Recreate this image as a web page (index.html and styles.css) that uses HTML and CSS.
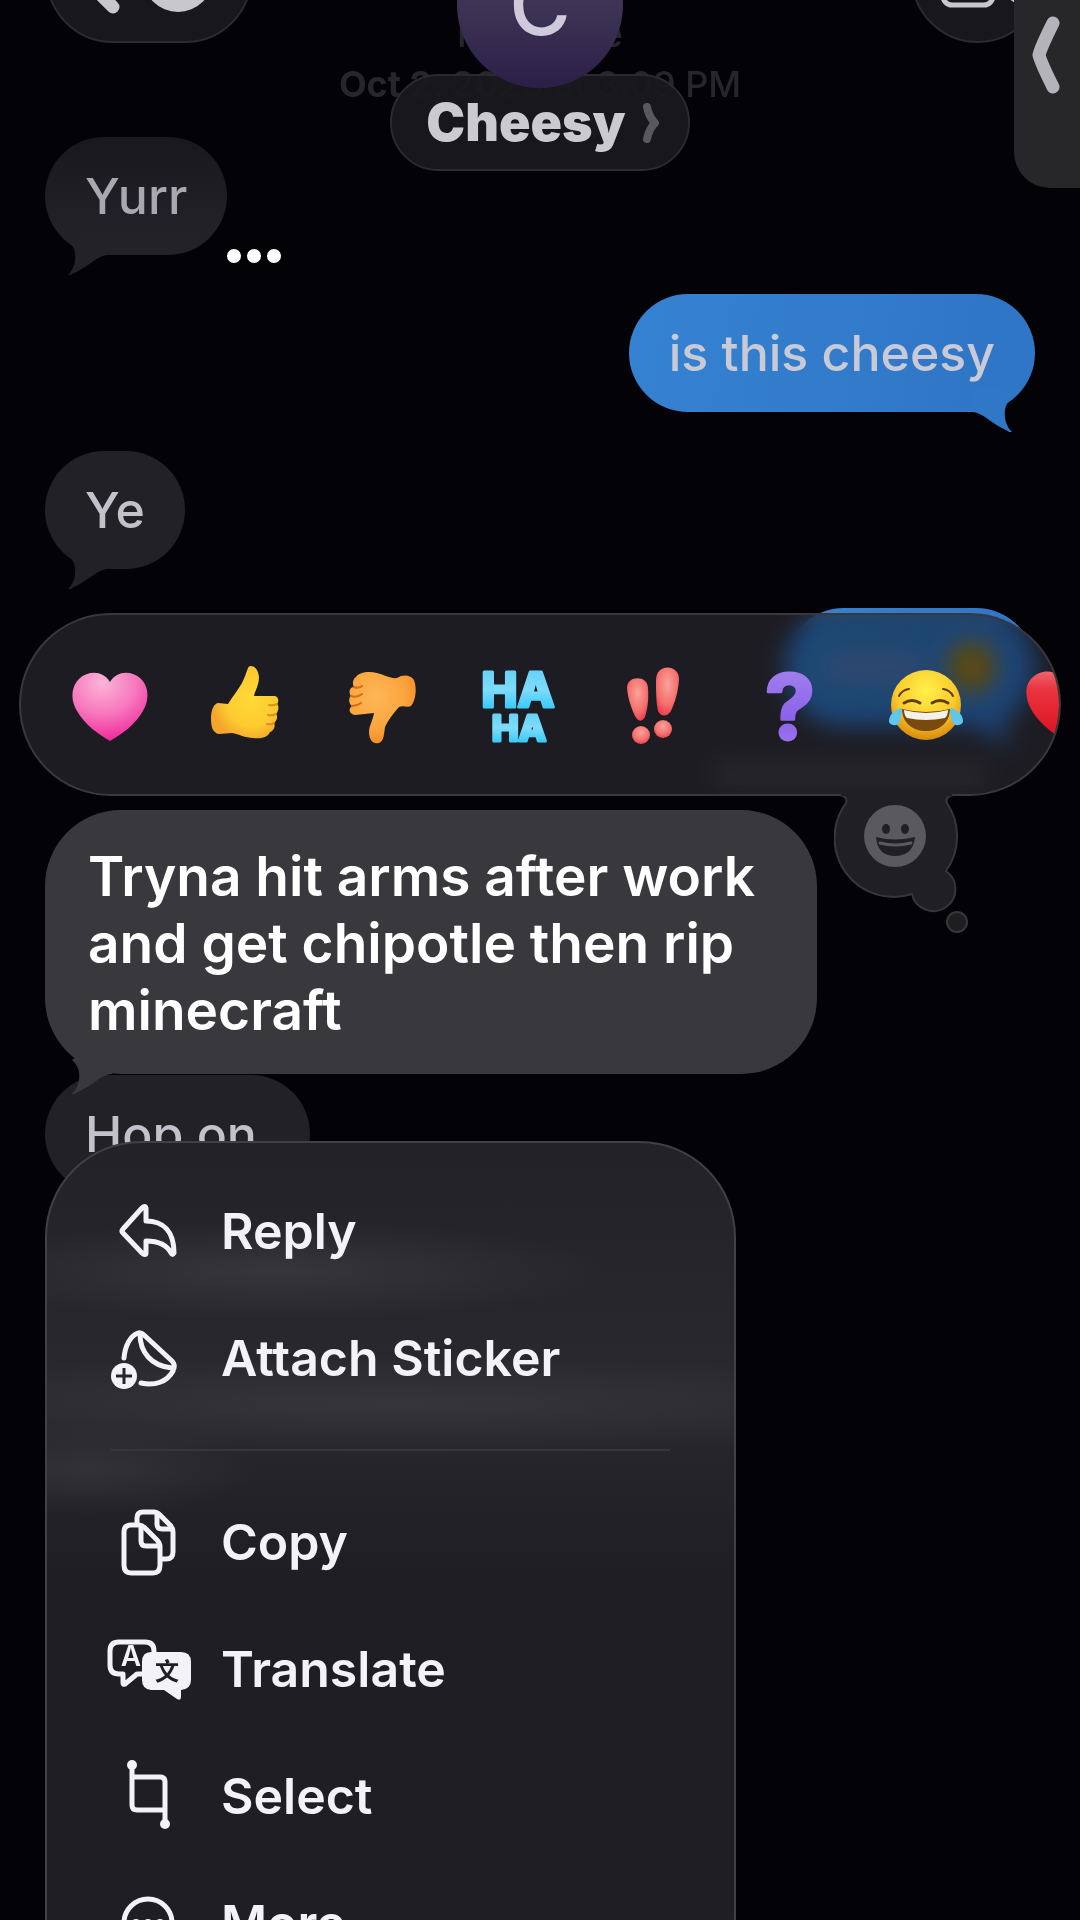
FILE: index.html
```html
<!DOCTYPE html>
<html lang="en">

<head>
    <meta charset="UTF-8">
    <meta name="viewport" content="width=device-width, initial-scale=1.0">
    <title>Cheesy</title>
    <link rel="stylesheet" href="styles.css">
</head>

<body>

    <main class="chat">
        <div class="stamp">
            <p>iMessage</p>
            <p><b>Oct 2, 2025</b> at 3:09 PM</p>
        </div>
        <p class="msg them first">Yurr</p>
        <p class="msg me">is this cheesy</p>
        <p class="msg them">Ye</p>
        <div class="msg me short"><span class="smudge"></span><span class="smudge face"></span></div>
        <div class="receipt"></div>
        <p class="msg them under">Hop on</p>
    </main>

    <header class="header">
        <button class="glass back" aria-label="Back">
            <svg width="206" height="133" viewBox="0 0 206 133">
                <path d="M67 35 L36 66 L67 97" class="line" stroke-width="13" />
                <circle cx="132" cy="67" r="35" fill="#c8c7cc" />
            </svg>
        </button>
        <div class="contact">
            <div class="avatar">C</div>
            <button class="glass name">Cheesy
                <svg width="18" height="40" viewBox="0 0 18 40">
                    <path d="M5 4 Q7 14 13 20 Q7 26 5 36" fill="none" stroke="#59595d" stroke-width="8" stroke-linecap="round" stroke-linejoin="round" />
                </svg>
            </button>
        </div>
        <button class="glass video" aria-label="Video call">
            <svg width="133" height="133" viewBox="0 0 133 133">
                <rect x="32" y="54" width="50" height="41" rx="9" class="line" stroke-width="5" />
                <path d="M90 68 L104 58 V90 L90 80 Z" class="line" stroke-width="5" />
            </svg>
        </button>
    </header>

    <button class="side-tab" aria-label="Open panel">
        <svg width="28" height="78" viewBox="0 0 28 78">
            <path d="M21 7 Q9 31 7 39 Q9 47 21 71" fill="none" stroke="#b4b3ba" stroke-width="13" stroke-linecap="round" stroke-linejoin="round" />
        </svg>
    </button>

    <button class="dots" aria-label="More options"><i></i><i></i><i></i></button>

    <section class="overlay">
        <div class="reactions-wrap">
            <div class="reactions">
                <button aria-label="Love">
                    <svg viewBox="0 0 80 80">
                        <defs>
                            <radialGradient id="pink" cx=".4" cy=".15" r=".9">
                                <stop offset="0" stop-color="#fbb4d8" />
                                <stop offset=".5" stop-color="#f778bd" />
                                <stop offset="1" stop-color="#f0209a" />
                            </radialGradient>
                        </defs>
                        <path fill="url(#pink)" d="M40 17 C33 5 18 6 10 13 C0 22 1 36 7 46 C15 60 28 69 40 76 C52 69 65 60 73 46 C79 36 80 22 70 13 C62 6 47 5 40 17Z" />
                    </svg>
                </button>
                <button aria-label="Like">
                    <svg viewBox="0 0 80 80">
                        <defs>
                            <radialGradient id="yellow" cx=".6" cy=".45" r=".6">
                                <stop offset="0" stop-color="#ffda36" />
                                <stop offset=".65" stop-color="#fdca30" />
                                <stop offset="1" stop-color="#f3a52c" />
                            </radialGradient>
                        </defs>
                        <g transform="translate(5 0)">
                            <path fill="url(#yellow)" d="M37 3 C38 -1 47 0 48 12 C48 20 44 26 43 31 L63 31 C68 31 68 37 66 39 C68 41 68 46 65 49 C67 51 66 56 63 58 C65 62 62 66 59 67 C57 73 48 74 42 73 C34 73 28 69 21 68 L8 69 C2 68 0 62 0 54 C0 44 3 39 7 38 L17 39 C22 31 27 25 31 18 C34 12 35 8 37 3Z" />
                            <path d="M66 39 Q62 41 58 40 M65 49 Q61 51 57 50 M63 58 Q60 60 56 59" fill="none" stroke="#dd8f1c" stroke-width="2" stroke-linecap="round" />
                        </g>
                    </svg>
                </button>
                <button aria-label="Dislike">
                    <svg viewBox="0 0 80 80">
                        <defs>
                            <radialGradient id="orange" cx=".4" cy=".35" r=".7">
                                <stop offset="0" stop-color="#fdb757" />
                                <stop offset=".6" stop-color="#fba63f" />
                                <stop offset="1" stop-color="#f58a25" />
                            </radialGradient>
                        </defs>
                        <g transform="translate(7 7)">
                            <path fill="url(#orange)" d="M7 5 C10 0 20 -1 28 1 C36 3 42 7 48 6 C54 2 62 3 65 8 C68 16 67 28 62 34 C58 36 54 33 50 35 C44 42 39 48 36 55 C35 62 35 69 30 71 C23 73 20 66 20 60 C20 54 24 48 25 41 L6 43 C0 42 -1 37 3 34 C0 32 -1 26 2 24 C-1 20 1 15 5 15 C3 11 4 7 7 5Z" />
                            <path d="M5 15 Q9 17 13 14 M2 24 Q8 26 13 22 M3 34 Q8 34 12 31" fill="none" stroke="#d56b12" stroke-width="2" stroke-linecap="round" />
                        </g>
                    </svg>
                </button>
                <button aria-label="Laugh">
                    <svg viewBox="0 0 80 80">
                        <defs>
                            <linearGradient id="blue" x1="0" y1="0" x2="0" y2="1">
                                <stop offset="0" stop-color="#58cdf5" />
                                <stop offset=".5" stop-color="#7edcfb" />
                                <stop offset="1" stop-color="#12c0fb" />
                            </linearGradient>
                        </defs>
                        <text class="haha" x="40" y="42" font-size="48">HA</text>
                        <text class="haha" x="41" y="76" font-size="36">HA</text>
                    </svg>
                </button>
                <button aria-label="Emphasize">
                    <svg viewBox="0 0 80 80">
                        <defs>
                            <radialGradient id="coral" cx=".5" cy=".35" r=".65">
                                <stop offset="0" stop-color="#f9a39a" />
                                <stop offset=".65" stop-color="#f5716f" />
                                <stop offset="1" stop-color="#ee4250" />
                            </radialGradient>
                        </defs>
                        <g fill="url(#coral)">
                            <path d="M13 23 C13 10 34 10 34 23 C35 36 33 46 31 52 C28 57 24 57 21 51 C17 42 14 34 13 23Z" />
                            <path d="M42 15 C42 -2 66 -1 65 15 C64 27 61 37 57 46 C53 52 47 52 44 46 C42 37 42 27 42 15Z" />
                            <circle cx="27" cy="70" r="9" />
                            <circle cx="49" cy="64" r="9" />
                        </g>
                    </svg>
                </button>
                <button aria-label="Question">
                    <svg viewBox="0 0 80 80">
                        <defs>
                            <linearGradient id="violet" x1="0" y1="0" x2="0" y2="1">
                                <stop offset="0" stop-color="#a98af0" />
                                <stop offset=".6" stop-color="#8c62ea" />
                                <stop offset="1" stop-color="#a37df2" />
                            </linearGradient>
                        </defs>
                        <text class="question" x="40" y="74" font-size="90">?</text>
                    </svg>
                </button>
                <button aria-label="Tears of joy">
                    <svg viewBox="0 0 80 80">
                        <defs>
                            <radialGradient id="joy" cx=".5" cy=".3" r=".7">
                                <stop offset="0" stop-color="#fff04a" />
                                <stop offset=".6" stop-color="#fbcb2d" />
                                <stop offset="1" stop-color="#d98a0c" />
                            </radialGradient>
                        </defs>
                        <circle cx="40" cy="40" r="35" fill="url(#joy)" />
                        <path d="M13 31 Q16 25 23 24 M67 31 Q64 25 57 24" fill="none" stroke="#5e3d09" stroke-width="2" stroke-linecap="round" />
                        <path d="M18 38 Q26 33 34 38 M46 38 Q54 33 62 38" fill="none" stroke="#5e3d09" stroke-width="3" stroke-linecap="round" />
                        <path d="M16 44 Q40 50 64 44 C64 58 53 66 40 66 C27 66 16 58 16 44Z" fill="#7a4a0c" />
                        <path d="M18 45 Q40 51 62 45 Q62 50 59 53 Q40 57 21 53 Q18 50 18 45Z" fill="#f4f1ea" />
                        <path d="M16 43 C10 44 3 49 3 56 C3 61 13 62 14 56 C15 52 16 48 16 43Z" fill="#5fc6ee" />
                        <path d="M64 43 C70 44 77 49 77 56 C77 61 67 62 66 56 C65 52 64 48 64 43Z" fill="#5fc6ee" />
                    </svg>
                </button>
                <button aria-label="Red heart">
                    <svg viewBox="0 0 80 80">
                        <defs>
                            <linearGradient id="red" x1="0" y1="0" x2="0" y2="1">
                                <stop offset="0" stop-color="#f0656b" />
                                <stop offset=".25" stop-color="#ea3540" />
                                <stop offset="1" stop-color="#d9121f" />
                            </linearGradient>
                        </defs>
                        <path fill="url(#red)" d="M40 16 C35 4 20 4 11 12 C2 20 3 33 9 44 C16 57 28 66 40 74 C52 66 64 57 71 44 C77 33 78 20 69 12 C60 4 45 4 40 16Z" />
                    </svg>
                </button>
            </div>
            <button class="more-emoji" aria-label="More emoji">
                <svg width="140" height="146" viewBox="834 791 140 146">
                    <path d="M839 795 Q848 796 846 803 A59 59 0 0 0 912 894 A22 22 0 1 0 946 871 A60 60 0 0 0 947 803 Q945 796 954 795" fill="#202024" stroke="#37363b" stroke-width="2" />
                    <path d="M841 791 H952 V796 H841 Z" fill="#202024" />
                    <circle cx="957" cy="922" r="10" fill="#1e1e21" stroke="#37363b" stroke-width="2" />
                    <circle cx="895" cy="836" r="31" fill="#5a595d" />
                    <ellipse cx="886" cy="829" rx="4" ry="5" fill="#202024" />
                    <ellipse cx="905" cy="829" rx="4" ry="5" fill="#202024" />
                    <path d="M876 837 Q895 842 915 837 C914 850 906 856 895 856 C884 856 877 850 876 837Z" fill="#202024" />
                    <path d="M880 843 Q895 847 911 843" fill="none" stroke="#5a595d" stroke-width="3" stroke-linecap="round" />
                </svg>
            </button>
        </div>

        <p class="held">Tryna hit arms after work and get chipotle then rip minecraft</p>

        <nav class="menu">
            <button class="item">
                <svg viewBox="0 0 90 76">
                    <path class="stroke" d="M43 15 V28 C60 28 71 38 71 60 C70 62 69 62 68 60 C64 52 56 48 43 48 V60 C43 62 41 62 39 60 L20 40 Q18 38 20 36 L39 15 Q42 12 43 15Z" />
                </svg>
                Reply
            </button>
            <button class="item">
                <svg viewBox="0 0 90 76">
                    <path class="stroke" d="M21 38 C22 26 27 16 35 13 Q38 12 41 15 L69 41 Q73 45 70 51 C64 62 52 66 38 63" />
                    <path class="stroke" d="M37 14 C37 32 48 46 69 48" />
                    <circle cx="21" cy="56" r="13" fill="#f3f2f8" />
                    <path d="M21 48 V64 M13 56 H29" stroke="#26262a" stroke-width="3" />
                </svg>
                Attach Sticker
            </button>
            <hr>
            <button class="item">
                <svg viewBox="0 0 90 76">
                    <path class="stroke" d="M34 19 V14 Q34 8 40 8 H51 Q54 8 57 11 L67 21 Q70 24 70 28 V48 Q70 55 63 55 H59" />
                    <path class="stroke" d="M54 10 V20 Q54 25 59 25 H68" />
                    <path class="stroke" d="M28 21 H36 Q39 21 42 24 L54 36 Q57 39 57 43 V61 Q57 69 50 69 H28 Q21 69 21 61 V28 Q21 21 28 21Z" />
                    <path class="stroke" d="M38 23 V37 Q38 42 43 42 H56" />
                </svg>
                Copy
            </button>
            <button class="item">
                <svg viewBox="0 0 90 76">
                    <path class="stroke" d="M39 43 H34 L22 53 Q20 54 20 52 V43 H16 Q7 43 7 34 V20 Q7 11 16 11 H42 Q51 11 51 20 V22" />
                    <text x="28" y="35" font-size="28" font-weight="600" text-anchor="middle" fill="#f3f2f8">A</text>
                    <path d="M48 21 H78 Q88 21 88 31 V49 Q88 58 78 59 V66 Q78 70 74 68 L61 59 H48 Q39 58 39 49 V31 Q39 21 48 21Z" fill="#f3f2f8" />
                    <text class="cjk" x="64" y="49" font-size="24" font-weight="700" text-anchor="middle" fill="#202024">文</text>
                </svg>
                Translate
            </button>
            <button class="item">
                <svg viewBox="0 0 90 76">
                    <path class="stroke" d="M29 10 V47 Q29 52 34 52 H61 M29 19 H57 Q62 19 62 24 V65" />
                    <circle cx="29" cy="7" r="5" fill="#f3f2f8" />
                    <circle cx="62" cy="66" r="5" fill="#f3f2f8" />
                </svg>
                Select
            </button>
            <button class="item">
                <svg viewBox="0 0 90 76">
                    <circle class="stroke" cx="45" cy="38" r="24" />
                    <circle cx="33" cy="38" r="4" fill="#f3f2f8" />
                    <circle cx="45" cy="38" r="4" fill="#f3f2f8" />
                    <circle cx="57" cy="38" r="4" fill="#f3f2f8" />
                </svg>
                More...
            </button>
        </nav>
    </section>

</body>

</html>
```

FILE: styles.css
```css
* {
    margin: 0;
    padding: 0;
    box-sizing: border-box;
}

body {
    position: relative;
    min-height: 100vh;
    overflow: hidden;
    background-color: #020207;
    font-family: Inter, "Liberation Sans", sans-serif;
    font-weight: 500;
    color: #f3f2f8;
}

button {
    border: none;
    background: none;
    font: inherit;
    color: inherit;
    cursor: pointer;
}

svg {
    display: block;
    flex: none;
}

/* conversation behind the menu */
.chat {
    display: flex;
    flex-direction: column;
    gap: 39px;
    padding: 9px 45px;
}

.stamp {
    text-align: center;
    font-size: 36px;
    line-height: 50px;
    color: #26262b;
}

.stamp b {
    font-weight: 700;
}

.msg {
    position: relative;
    align-self: flex-start;
    height: 118px;
    padding: 0 40px;
    border-radius: 59px;
    font-size: 50px;
    line-height: 119px;
    background-color: #222125;
    color: #c3c1ca;
}

.msg::after,
.held::after {
    content: "";
    position: absolute;
    left: 23px;
    bottom: -20px;
    width: 45px;
    height: 42px;
    background-color: inherit;
    clip-path: path("M0 42 C6 36 8 28 7 20 C6 14 3 11 0 8 L10 0 L42 0 L40 22 C30 22 20 34 6 40 C3 42 1 43 0 42Z");
}

.first {
    margin-top: -11px;
    background-color: #232229;
    background-image: linear-gradient(#19181c, #232229 85%);
    color: #a9a7af;
}

.me {
    align-self: flex-end;
    background-color: #3077c7;
    background-image: linear-gradient(100deg, #3682d2, #3076c6 85%);
    color: #c9cad6;
}

.me::after {
    left: auto;
    right: 23px;
    transform: scaleX(-1);
}

.short {
    display: flex;
    align-items: center;
    gap: 24px;
    width: 250px;
}

.smudge {
    width: 104px;
    height: 28px;
    border-radius: 14px;
    background-color: #5c84bf;
}

.face {
    width: 50px;
    height: 50px;
    border-radius: 50%;
    background-color: #b08a10;
}

.receipt {
    align-self: flex-end;
    width: 270px;
    height: 22px;
    margin: -2px 50px 0 0;
    background-color: #232328;
}

.under {
    min-width: 265px;
    margin-top: 251px;
}

/* top bar */
.header {
    position: absolute;
    top: -90px;
    left: 0;
    right: 0;
    display: grid;
    grid-template-columns: 1fr auto 1fr;
    align-items: start;
    padding: 0 36px;
}

.glass {
    border: 2px solid #2b2a2f;
    border-radius: 67px;
    background-color: #18171b;
}

.back {
    width: 206px;
    height: 133px;
    margin-left: 10px;
    overflow: hidden;
}

.back svg,
.video svg {
    margin: -2px;
}

.video {
    justify-self: end;
    width: 133px;
    height: 133px;
    overflow: hidden;
}

.line {
    fill: none;
    stroke: #c8c7cc;
    stroke-linecap: round;
    stroke-linejoin: round;
}

.contact {
    display: flex;
    flex-direction: column;
    align-items: center;
    padding-top: 12px;
}

.avatar {
    position: relative;
    z-index: 1;
    width: 166px;
    height: 166px;
    border-radius: 50%;
    background-image: linear-gradient(#443c5e, #3d3455 50%, #2c1f47);
    text-align: center;
    font-size: 84px;
    line-height: 166px;
    color: #cfcadb;
}

.name {
    display: flex;
    align-items: center;
    gap: 16px;
    height: 97px;
    margin-top: -14px;
    padding: 0 28px 0 34px;
    background-color: rgba(25, 24, 28, 0.95);
    font-size: 52px;
    font-weight: 900;
    color: #cbcad0;
}

.side-tab {
    position: absolute;
    top: 0;
    right: 0;
    width: 66px;
    height: 188px;
    padding: 16px 0 0 18px;
    border-radius: 0 0 0 36px;
    background-color: #27272a;
    display: flex;
    align-items: flex-start;
}

.dots {
    position: absolute;
    top: 249px;
    left: 227px;
    display: flex;
    gap: 6px;
}

.dots i {
    width: 14px;
    height: 14px;
    border-radius: 50%;
    background-color: #fff;
}

/* tapback bar, held message and context menu */
.overlay {
    position: absolute;
    inset: 0;
    display: flex;
    flex-direction: column;
    align-items: flex-start;
    padding-top: 613px;
    overflow: hidden;
}

.reactions-wrap {
    position: relative;
    align-self: stretch;
    margin: 0 19px;
}

.reactions {
    display: flex;
    align-items: center;
    height: 183px;
    padding-left: 21px;
    border: 2px solid #39383d;
    border-radius: 92px;
    background-color: rgba(43, 42, 46, 0.68);
    backdrop-filter: blur(12px) saturate(1.8);
    overflow: hidden;
}

.reactions button {
    flex: 0 0 136px;
    display: flex;
    justify-content: center;
}

.reactions svg {
    width: 80px;
    height: 80px;
}

.haha {
    font-weight: 800;
    text-anchor: middle;
    fill: url(#blue);
    stroke: url(#blue);
    stroke-width: 3px;
    stroke-linejoin: round;
}

.question {
    font-weight: 700;
    text-anchor: middle;
    fill: url(#violet);
    stroke: url(#violet);
    stroke-width: 3px;
    stroke-linejoin: round;
}

.more-emoji {
    position: absolute;
    right: 87px;
    top: 178px;
}

.held {
    position: relative;
    max-width: 772px;
    margin: 14px 45px 0;
    padding: 33px 43px 30px;
    border-radius: 76px;
    background-color: #39383d;
    font-size: 55px;
    font-weight: 600;
    line-height: 67px;
    color: #fff;
}

.held::after {
    left: 27px;
}

.menu {
    width: 691px;
    margin: 67px 0 0 45px;
    padding: 24px 0;
    border: 2px solid #414045;
    border-radius: 96px;
    background-color: #1f1e22;
    background-image:
        radial-gradient(ellipse 330px 50px at 230px 128px, rgba(70, 70, 76, 0.5), transparent),
        radial-gradient(ellipse 600px 50px at 350px 262px, rgba(70, 70, 76, 0.45), transparent),
        radial-gradient(ellipse 170px 46px at 40px 326px, rgba(70, 70, 76, 0.4), transparent),
        linear-gradient(#232226, #29282d 240px, #252429 330px, #1f1e22 430px);
}

.item {
    display: flex;
    align-items: center;
    gap: 28px;
    width: 100%;
    height: 127px;
    padding-left: 56px;
    font-size: 50px;
    font-weight: 600;
    text-align: left;
}

.item svg {
    width: 90px;
    height: 76px;
}

.stroke {
    fill: none;
    stroke: #f3f2f8;
    stroke-width: 5px;
    stroke-linecap: round;
    stroke-linejoin: round;
}

.cjk {
    font-family: "Noto Sans CJK SC", sans-serif;
}

.menu hr {
    height: 2px;
    margin: 28px 64px 27px;
    border: none;
    background-color: #37363b;
}
```
